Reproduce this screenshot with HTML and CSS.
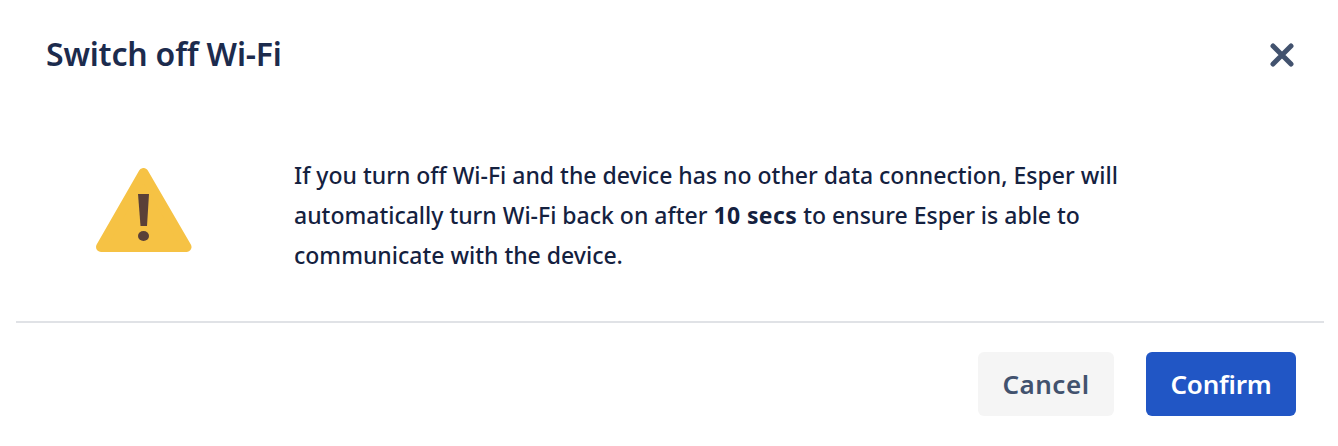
FILE: index.html
```html
<!DOCTYPE html>
<html lang="en">

<head>
  <meta charset="UTF-8">
  <title>Switch off Wi-Fi</title>
  <link rel="stylesheet" href="styles.css">
</head>

<body>
  <div class="dialog">
    <div class="dialog-header">
      <h2 class="dialog-title">Switch off Wi-Fi</h2>
      <button class="close-btn" aria-label="Close">
        <svg width="24" height="24" viewBox="0 0 24 24">
          <path d="M3 3L21 21M21 3L3 21" stroke="#42526e" stroke-width="5" stroke-linecap="round" fill="none" />
        </svg>
      </button>
    </div>
    <div class="dialog-body">
      <svg class="warn-icon" width="96" height="84" viewBox="0 0 96 84">
        <path d="M47.500 5L90.500 79H5Z" fill="#f6c244" stroke="#f6c244" stroke-width="10" stroke-linejoin="round" />
        <path d="M42 26H53L51 58H44.500Z" fill="#5a4038" />
        <ellipse cx="47.500" cy="68" rx="5.500" ry="5" fill="#5a4038" />
      </svg>
      <p class="message">If you turn off Wi-Fi and the device has no other data connection, Esper will automatically turn Wi-Fi back on after <b>10 secs</b> to ensure Esper is able to communicate with the device.</p>
    </div>
    <div class="dialog-footer">
      <button class="btn btn-cancel">Cancel</button>
      <button class="btn btn-confirm">Confirm</button>
    </div>
  </div>
</body>

</html>
```

FILE: styles.css
```css
* {
  box-sizing: border-box;
}

body {
  margin: 0;
  background: #fff;
  font-family: "Noto Sans", "Open Sans", sans-serif;
}

.dialog {
  width: 1338px;
  height: 446px;
  display: flex;
  flex-direction: column;
  padding: 0 14px 0 16px;
}

.dialog-header {
  display: flex;
  align-items: center;
  justify-content: space-between;
  height: 110px;
  padding: 0 30px;
}

.dialog-title {
  margin: 0 0 3px;
  font-size: 32px;
  font-weight: 600;
  letter-spacing: -0.2px;
  color: #1c2b4d;
}

.close-btn {
  padding: 0;
  border: none;
  background: none;
  display: flex;
  cursor: pointer;
}

.dialog-body {
  display: flex;
  align-items: center;
  height: 213px;
  padding: 0 0 2px 80px;
  border-bottom: 2px solid #e0e2e6;
}

.warn-icon {
  flex: none;
  margin-bottom: 10px;
}

.message {
  margin: 0 0 0 102px;
  width: 860px;
  font-size: 23px;
  line-height: 40px;
  font-weight: 500;
  color: #14213f;
}

.message b {
  font-weight: 700;
  letter-spacing: 0.4px;
}

.dialog-footer {
  display: flex;
  justify-content: flex-end;
  gap: 32px;
  padding: 29px 28px 0 0;
}

.btn {
  height: 64px;
  border: none;
  border-radius: 6px;
  font-family: inherit;
  font-size: 26px;
  font-weight: 600;
  cursor: pointer;
}

.btn-cancel {
  width: 136px;
  background: #f5f5f5;
  color: #42526e;
  letter-spacing: 0.5px;
}

.btn-confirm {
  width: 150px;
  background: #2156c5;
  color: #fff;
  letter-spacing: -0.2px;
}
```
